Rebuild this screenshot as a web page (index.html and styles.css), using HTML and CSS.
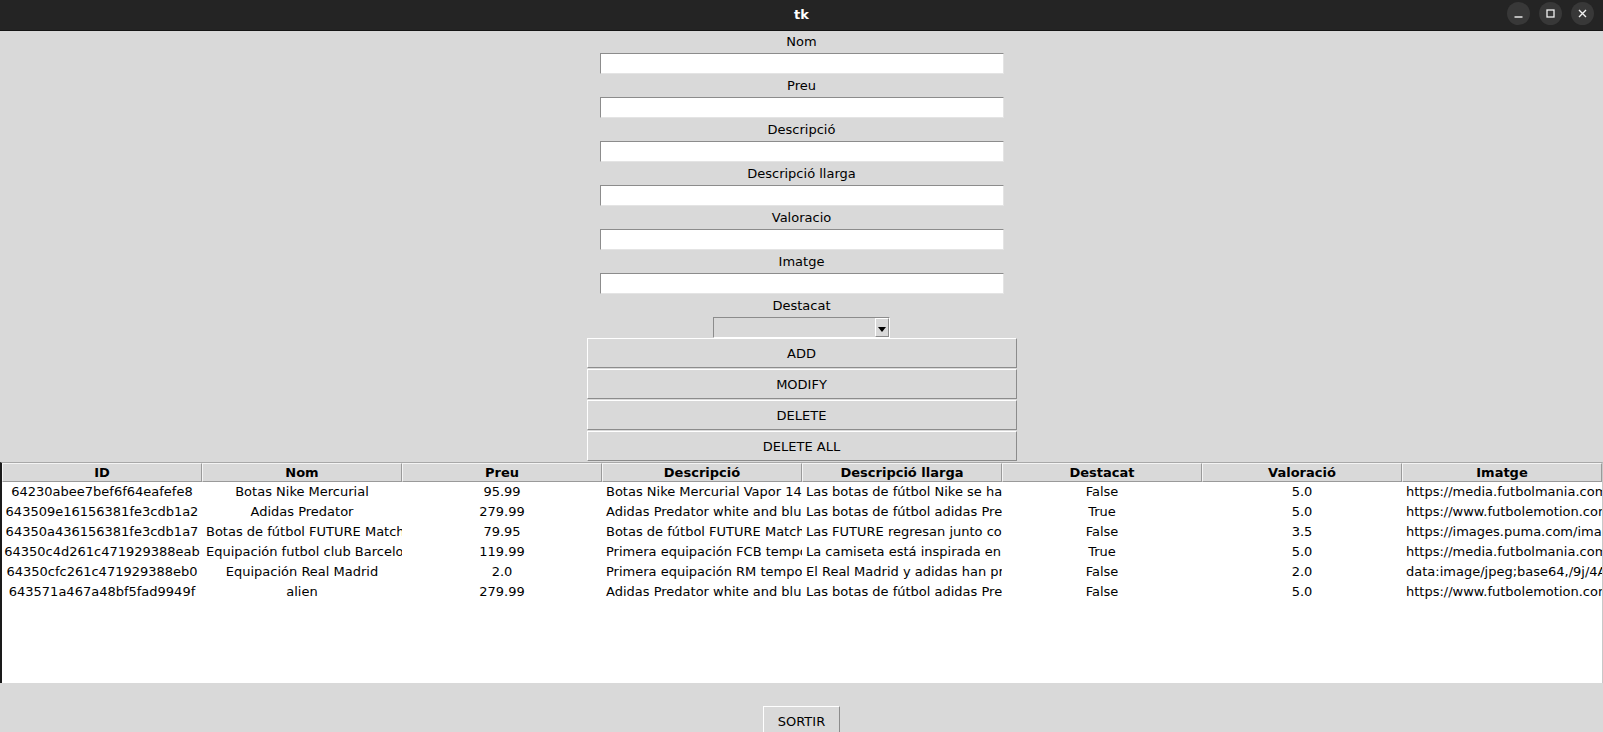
FILE: index.html
```html
<!DOCTYPE html>
<html lang="ca">
<head>
<meta charset="utf-8">
<title>tk</title>
<link rel="stylesheet" href="styles.css">
</head>
<body>
<div class="window">
  <header class="titlebar">
    <div class="spacer"></div>
    <div class="title">tk</div>
    <div class="controls">
      <span class="ctl"><svg width="23" height="23" viewBox="0 0 23 23"><line x1="7.5" y1="15" x2="15.5" y2="15" stroke="#f2f2f2" stroke-width="1.4"/></svg></span>
      <span class="ctl"><svg width="23" height="23" viewBox="0 0 23 23"><rect x="8" y="8" width="7" height="7" fill="none" stroke="#f2f2f2" stroke-width="1.3"/></svg></span>
      <span class="ctl"><svg width="23" height="23" viewBox="0 0 23 23"><path d="M8 8 L15 15 M15 8 L8 15" stroke="#f2f2f2" stroke-width="1.4"/></svg></span>
    </div>
  </header>

  <main class="content">
    <section class="form">
      <div class="label">Nom</div>
      <div class="entry"></div>
      <div class="label">Preu</div>
      <div class="entry"></div>
      <div class="label">Descripció</div>
      <div class="entry"></div>
      <div class="label">Descripció llarga</div>
      <div class="entry"></div>
      <div class="label">Valoracio</div>
      <div class="entry"></div>
      <div class="label">Imatge</div>
      <div class="entry"></div>
      <div class="label">Destacat</div>
      <div class="combo">
        <div class="combo-field"></div>
        <div class="combo-arrow"><svg width="8" height="5" viewBox="0 0 8 5"><path d="M0 0 H8 L4 5 Z" fill="#000"/></svg></div>
      </div>
      <div class="btn wide">ADD</div>
      <div class="btn wide">MODIFY</div>
      <div class="btn wide">DELETE</div>
      <div class="btn wide">DELETE ALL</div>
    </section>

    <section class="tree">
      <div class="row head">
        <div class="cell">ID</div>
        <div class="cell">Nom</div>
        <div class="cell">Preu</div>
        <div class="cell">Descripció</div>
        <div class="cell">Descripció llarga</div>
        <div class="cell">Destacat</div>
        <div class="cell">Valoració</div>
        <div class="cell">Imatge</div>
      </div>
      <div class="row">
        <div class="cell c">64230abee7bef6f64eafefe8</div>
        <div class="cell c">Botas Nike Mercurial</div>
        <div class="cell c">95.99</div>
        <div class="cell l">Botas Nike Mercurial Vapor 14 Elite</div>
        <div class="cell l">Las botas de fútbol Nike se han diseñado</div>
        <div class="cell c">False</div>
        <div class="cell c">5.0</div>
        <div class="cell l">https://media.futbolmania.com/media/catalog</div>
      </div>
      <div class="row">
        <div class="cell c">643509e16156381fe3cdb1a2</div>
        <div class="cell c">Adidas Predator</div>
        <div class="cell c">279.99</div>
        <div class="cell l">Adidas Predator white and blue</div>
        <div class="cell l">Las botas de fútbol adidas Predator</div>
        <div class="cell c">True</div>
        <div class="cell c">5.0</div>
        <div class="cell l">https://www.futbolemotion.com/imagesarts</div>
      </div>
      <div class="row">
        <div class="cell c">64350a436156381fe3cdb1a7</div>
        <div class="cell l">Botas de fútbol FUTURE Match</div>
        <div class="cell c">79.95</div>
        <div class="cell l">Botas de fútbol FUTURE Match</div>
        <div class="cell l">Las FUTURE regresan junto con</div>
        <div class="cell c">False</div>
        <div class="cell c">3.5</div>
        <div class="cell l">https://images.puma.com/image/upload</div>
      </div>
      <div class="row">
        <div class="cell c">64350c4d261c471929388eab</div>
        <div class="cell l">Equipación futbol club Barcelona</div>
        <div class="cell c">119.99</div>
        <div class="cell l">Primera equipación FCB temporada</div>
        <div class="cell l">La camiseta está inspirada en</div>
        <div class="cell c">True</div>
        <div class="cell c">5.0</div>
        <div class="cell l">https://media.futbolmania.com/media/catalog</div>
      </div>
      <div class="row">
        <div class="cell c">64350cfc261c471929388eb0</div>
        <div class="cell c">Equipación Real Madrid</div>
        <div class="cell c">2.0</div>
        <div class="cell l">Primera equipación RM temporada</div>
        <div class="cell l">El Real Madrid y adidas han presentado</div>
        <div class="cell c">False</div>
        <div class="cell c">2.0</div>
        <div class="cell l">data:image/jpeg;base64,/9j/4AAQSkZJRg</div>
      </div>
      <div class="row">
        <div class="cell c">643571a467a48bf5fad9949f</div>
        <div class="cell c">alien</div>
        <div class="cell c">279.99</div>
        <div class="cell l">Adidas Predator white and blue</div>
        <div class="cell l">Las botas de fútbol adidas Predator</div>
        <div class="cell c">False</div>
        <div class="cell c">5.0</div>
        <div class="cell l">https://www.futbolemotion.com/imagesarts</div>
      </div>
    </section>

    <footer class="bottom">
      <div class="btn exit">SORTIR</div>
    </footer>
  </main>
</div>
</body>
</html>
```

FILE: styles.css
```css
* { box-sizing: border-box; }

html, body {
  margin: 0;
  padding: 0;
  width: 1603px;
  height: 732px;
  overflow: hidden;
  background: #d9d9d9;
  font-family: "DejaVu Sans", "Liberation Sans", sans-serif;
  font-size: 13px;
  color: #000;
}

.window {
  display: flex;
  flex-direction: column;
  height: 732px;
}

.titlebar {
  height: 31px;
  flex: none;
  background: #242424;
  border-bottom: 1px solid #141414;
  display: grid;
  grid-template-columns: 1fr auto 1fr;
  align-items: center;
}

.title {
  color: #ffffff;
  font-weight: bold;
  font-size: 13px;
  padding-bottom: 2px;
}

.controls {
  justify-self: end;
  display: flex;
  gap: 9px;
  padding-right: 9px;
  padding-bottom: 4px;
}

.ctl {
  width: 23px;
  height: 23px;
  border-radius: 50%;
  background: #383838;
  display: block;
}

.ctl svg { display: block; }

.content {
  flex: 1;
  display: flex;
  flex-direction: column;
}

.form {
  display: flex;
  flex-direction: column;
  align-items: center;
}

.label {
  height: 22px;
  line-height: 22px;
  text-align: center;
}

.entry {
  width: 404px;
  height: 21px;
  margin-bottom: 1px;
  background: #ffffff;
  border-top: 1px solid #8c8c8c;
  border-left: 1px solid #8c8c8c;
  border-bottom: 1px solid #e4e4e4;
  border-right: 1px solid #e4e4e4;
}

.combo {
  width: 177px;
  height: 21px;
  display: flex;
  background: #d9d9d9;
  border-top: 1px solid #8c8c8c;
  border-left: 1px solid #8c8c8c;
  border-bottom: 1px solid #ffffff;
  border-right: 1px solid #ffffff;
}

.combo-field { flex: 1; }

.combo-arrow {
  width: 14px;
  display: flex;
  align-items: flex-end;
  justify-content: center;
  padding-bottom: 4px;
  border-top: 1px solid #ffffff;
  border-left: 1px solid #ffffff;
  border-bottom: 1px solid #8c8c8c;
  border-right: 1px solid #8c8c8c;
}

.combo-arrow svg { display: block; }

.btn {
  background: #d9d9d9;
  border-top: 1px solid #ffffff;
  border-left: 1px solid #ffffff;
  border-bottom: 1px solid #8c8c8c;
  border-right: 1px solid #8c8c8c;
  display: flex;
  align-items: center;
  justify-content: center;
}

.btn.wide {
  width: 430px;
  height: 30px;
  margin-bottom: 1px;
}

.tree {
  height: 221px;
  flex: none;
  background: #ffffff;
  border-top: 1px solid #a8a8a8;
  border-left: 2px solid #1a1a1a;
  border-right: 1px solid #c8c8c8;
  overflow: hidden;
}

.row {
  display: grid;
  grid-template-columns: repeat(8, 200px);
  height: 20px;
}

.row.head {
  height: 19px;
  background: #d9d9d9;
}

.head .cell {
  font-weight: bold;
  text-align: center;
  line-height: 17px;
  border-top: 1px solid #f4f4f4;
  border-left: 1px solid #f4f4f4;
  border-right: 1px solid #9a9a9a;
  border-bottom: 1px solid #9a9a9a;
}

.cell {
  min-width: 0;
  overflow: hidden;
  white-space: nowrap;
  line-height: 20px;
}

.cell.c { text-align: center; }
.cell.l { text-align: left; padding-left: 4px; }

.bottom {
  display: flex;
  justify-content: center;
  padding-top: 23px;
}

.btn.exit {
  width: 77px;
  height: 31px;
  flex: none;
}
```
